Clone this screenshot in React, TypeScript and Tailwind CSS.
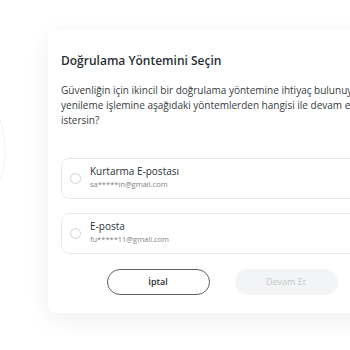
import React from "react";

const options = [
  { title: "Kurtarma E-postası", email: "sa*****in@gmail.com" },
  { title: "E-posta", email: "fu*****11@gmail.com" },
];

const App: React.FC = () => {
  return (
    <div
      className="relative w-[350px] h-[350px] overflow-hidden bg-white"
      style={{ fontFamily: '"Open Sans", "Noto Sans", sans-serif' }}
    >
      {/* faint background ring */}
      <svg className="absolute left-0 top-0" width="60" height="350" viewBox="0 0 60 350">
        <circle cx="-95" cy="150" r="100" fill="none" stroke="#f0f3f5" strokeWidth="1" />
      </svg>

      <div className="relative mt-[30px] ml-[48px] w-[350px] h-[283px] rounded-lg bg-white shadow-[0_6px_24px_rgba(0,0,0,0.07)] px-[13px] pt-[22px]">
        <h2 className="text-[12px] font-semibold text-[#2a2f34] leading-[18px]">
          Doğrulama Yöntemini Seçin
        </h2>
        <p className="mt-[13px] text-[10px] leading-[15px] text-[#363b40] whitespace-nowrap">
          Güvenliğin için ikincil bir doğrulama yöntemine ihtiyaç bulunuyor. Şifre
          <br />
          yenileme işlemine aşağıdaki yöntemlerden hangisi ile devam etmek
          <br />
          istersin?
        </p>

        <div className="mt-[30px] flex flex-col gap-[14px]">
          {options.map((o) => (
            <div
              key={o.title}
              className="flex items-center h-[41px] rounded-lg border border-[#e6e8ea] pl-[8px]"
            >
              <span className="w-[11px] h-[11px] rounded-full border border-[#cfd2d5]" />
              <div className="ml-[9px] pb-[3px] flex flex-col">
                <span className="text-[10px] leading-[14px] text-[#2c3034]">{o.title}</span>
                <span className="mt-[1px] text-[7.5px] leading-[11px] text-[#7d8287]">{o.email}</span>
              </div>
            </div>
          ))}
        </div>

        <div className="mt-[15px] flex justify-center gap-[25px] pr-[2px]">
          <button className="w-[103px] h-[26px] rounded-full border border-[#5d6267] text-[9px] font-semibold text-[#2c3034]">
            İptal
          </button>
          <button className="w-[103px] h-[26px] rounded-full bg-[#f3f4f5] text-[9px] text-[#c4c7ca]">
            Devam Et
          </button>
        </div>
      </div>
    </div>
  );
};

export default App;
